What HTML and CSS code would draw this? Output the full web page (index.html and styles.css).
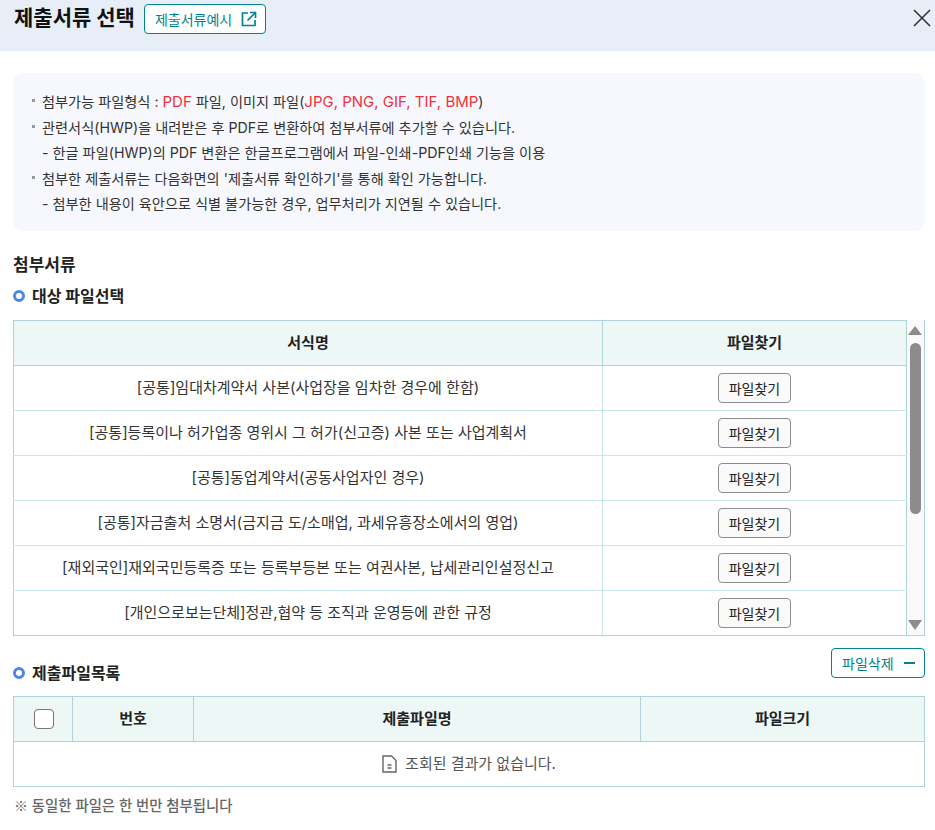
FILE: index.html
```html
<!DOCTYPE html>
<html lang="ko">
<head>
<meta charset="utf-8">
<title>제출서류 선택</title>
<link rel="stylesheet" href="styles.css">
</head>
<body>
<header class="top">
  <h1 class="title">제출서류 선택</h1>
  <a class="btn-line btn-sample">제출서류예시
    <svg class="ico-ext" width="16" height="16" viewBox="0 0 16 16" fill="none" stroke="#00838f" stroke-width="1.7"><path d="M7 2H1.5v12.5H14V9"/><path d="M6.5 9.5 14 2"/><path d="M9 1.5h5.5V7"/></svg>
  </a>
  <button class="close" aria-label="닫기"><svg width="18" height="18" viewBox="0 0 18 18" fill="none" stroke="#333" stroke-width="1.6"><path d="M1 1l16 16M17 1 1 17"/></svg></button>
</header>
<main class="body">
  <section class="notice">
    <p class="li">첨부가능 파일형식 : <em>PDF</em> 파일, 이미지 파일(<em>JPG, PNG, GIF, TIF, BMP</em>)</p>
    <p class="li">관련서식(HWP)을 내려받은 후 PDF로 변환하여 첨부서류에 추가할 수 있습니다.</p>
    <p class="sub">- 한글 파일(HWP)의 PDF 변환은 한글프로그램에서 파일-인쇄-PDF인쇄 기능을 이용</p>
    <p class="li">첨부한 제출서류는 다음화면의 '제출서류 확인하기'를 통해 확인 가능합니다.</p>
    <p class="sub">- 첨부한 내용이 육안으로 식별 불가능한 경우, 업무처리가 지연될 수 있습니다.</p>
  </section>
  <h2 class="h2">첨부서류</h2>
  <h3 class="h3">대상 파일선택</h3>
  <div class="scroll-box">
    <table class="grid grid-forms">
      <colgroup><col class="c-name"><col></colgroup>
      <thead><tr><th>서식명</th><th>파일찾기</th></tr></thead>
      <tbody>
        <tr><td>[공통]임대차계약서 사본(사업장을 임차한 경우에 한함)</td><td><button class="btn-find">파일찾기</button></td></tr>
        <tr><td>[공통]등록이나 허가업종 영위시 그 허가(신고증) 사본 또는 사업계획서</td><td><button class="btn-find">파일찾기</button></td></tr>
        <tr><td>[공통]동업계약서(공동사업자인 경우)</td><td><button class="btn-find">파일찾기</button></td></tr>
        <tr><td>[공통]자금출처 소명서(금지금 도/소매업, 과세유흥장소에서의 영업)</td><td><button class="btn-find">파일찾기</button></td></tr>
        <tr><td>[재외국인]재외국민등록증 또는 등록부등본 또는 여권사본, 납세관리인설정신고</td><td><button class="btn-find">파일찾기</button></td></tr>
        <tr><td>[개인으로보는단체]정관,협약 등 조직과 운영등에 관한 규정</td><td><button class="btn-find">파일찾기</button></td></tr>
      </tbody>
    </table>
    <div class="sbar">
      <span class="arrow up"></span>
      <span class="thumb-track"><span class="thumb"></span></span>
      <span class="arrow down"></span>
    </div>
  </div>
  <div class="list-head">
    <h3 class="h3 h3-list">제출파일목록</h3>
    <a class="btn-line btn-del">파일삭제<span class="minus"></span></a>
  </div>
  <table class="grid grid-files">
    <colgroup><col class="c-chk"><col class="c-no"><col class="c-file"><col></colgroup>
    <thead><tr><th class="th-chk"><span class="chk"></span></th><th>번호</th><th>제출파일명</th><th>파일크기</th></tr></thead>
    <tbody><tr><td colspan="4" class="empty">
      <svg class="ico-doc" width="15" height="18" viewBox="0 0 15 18" fill="none" stroke="#666" stroke-width="1.4"><path d="M1 1h8.5l4.5 4.5V17H1z"/><path d="M5.5 10h4M5.5 13h4"/></svg>조회된 결과가 없습니다.
    </td></tr></tbody>
  </table>
  <p class="foot"><span class="mark">※</span> 동일한 파일은 한 번만 첨부됩니다</p>
</main>
</body>
</html>
```
FILE: styles.css
```css
*, *::before, *::after { box-sizing: border-box; }
html, body { margin: 0; padding: 0; }
body {
  width: 935px;
  height: 830px;
  overflow: hidden;
  background: #fff;
  color: #222;
  font-family: Inter, "Noto Sans CJK KR", sans-serif;
  font-size: 15px;
}
.top {
  height: 51px;
  background: #e7eef8;
  display: flex;
  align-items: flex-start;
  padding: 4px 4px 0 14px;
}
.title {
  margin: 0 9px 0 0;
  font-size: 21px;
  line-height: 28px;
  font-weight: 700;
  color: #111;
}
.btn-line {
  display: inline-flex;
  align-items: center;
  height: 30px;
  border: 1px solid #00838f;
  border-radius: 4px;
  background: #fff;
  color: #00838f;
  font-size: 14px;
}
.btn-sample { width: 122px; padding-left: 10px; gap: 9px; }
.ico-ext { flex: none; }
.close {
  margin-left: auto;
  margin-top: 5px;
  padding: 0;
  border: 0;
  background: none;
  display: block;
  height: 18px;
}
.body { padding: 22px 10px 0 13px; }
.notice {
  height: 158px;
  padding: 16px 0 0 18px;
  background: #f7f8fe;
  border-radius: 10px;
  margin-bottom: 23px;
}
.notice p {
  margin: 0;
  font-size: 14.2px;
  line-height: 25.5px;
  color: #333;
  position: relative;
}
.notice em { font-style: normal; font-size: 15px; color: #f0323c; }
.li { padding-left: 11px; }
.li::before {
  content: "";
  position: absolute;
  left: 1px;
  top: 10px;
  width: 3px;
  height: 3px;
  background: #999;
}
.sub { padding-left: 11px; }
.h2 {
  margin: 0 0 8px;
  font-size: 17px;
  line-height: 23px;
  font-weight: 700;
  color: #222;
}
.h3 {
  margin: 0 0 13px;
  padding-left: 19px;
  font-size: 16px;
  line-height: 22px;
  font-weight: 700;
  color: #222;
  position: relative;
}
.h3::before {
  content: "";
  position: absolute;
  left: 0;
  top: 5px;
  width: 12px;
  height: 12px;
  border: 3px solid #4f86ec;
  border-radius: 50%;
  background: #fff;
}
.scroll-box {
  display: flex;
  height: 316px;
  border-right: 1px solid #b0d3d9;
  overflow: hidden;
  position: relative;
}
.grid {
  border-collapse: collapse;
  table-layout: fixed;
}
.grid th, .grid td {
  border: 1px solid #b0d3d9;
  text-align: center;
  padding: 0;
  font-size: 15px;
}
.grid th {
  height: 45px;
  padding-bottom: 3px;
  background: #edf7f6;
  font-weight: 700;
  color: #222;
}
.grid td { height: 45px; color: #333; }
.grid-forms { width: 894px; height: 316px; }
.grid-forms tbody td { border-color: #c9e6ea; border-left-color: #b0d3d9; }
.grid-forms tbody td:first-child { padding-bottom: 3px; }
.grid-forms tbody td:last-child { border-right-color: #b0d3d9; }
.grid-forms tbody tr:last-child td { border-bottom-color: #b0d3d9; }
.c-name { width: 589px; }
.btn-find {
  width: 73px;
  height: 30px;
  padding: 0;
  border: 1px solid #8c8c8c;
  border-radius: 4px;
  background: #fafafa;
  color: #222;
  font-family: inherit;
  font-size: 14px;
  vertical-align: middle;
}
.sbar {
  flex: 1;
  background: #fafafa;
  border-bottom: 1px solid #b0d3d9;
  display: flex;
  flex-direction: column;
  align-items: center;
  padding: 6px 1px 5px 0;
}
.arrow {
  flex: none;
  width: 0;
  height: 0;
  border-left: 7px solid transparent;
  border-right: 7px solid transparent;
}
.arrow.up { border-bottom: 9px solid #8c8c8c; }
.arrow.down { border-top: 10px solid #8c8c8c; }
.thumb-track { flex: 1; width: 100%; display: flex; justify-content: center; padding-top: 8px; }
.thumb { width: 11px; height: 171px; background: #8c8c8c; border-radius: 6px; }
.list-head {
  display: flex;
  justify-content: space-between;
  align-items: flex-start;
  height: 60px;
  padding-top: 12px;
}
.h3-list { margin: 14px 0 0; }
.btn-del {
  width: 94px;
  height: 30px;
  padding-left: 10px;
  gap: 10px;
}
.minus { width: 11px; height: 2px; background: #00838f; }
.grid-files { width: 912px; }
.c-chk { width: 59px; }
.c-no { width: 121px; }
.c-file { width: 447px; }
.grid th.th-chk { padding: 0 0 0 1px; }
.chk {
  display: block;
  width: 20px;
  height: 20px;
  margin: 0 auto;
  border: 1px solid #777;
  border-radius: 4px;
  background: #fff;
}
.grid td.empty { color: #555; padding-bottom: 3px; }
.ico-doc { vertical-align: -4px; margin-right: 8px; }
.foot {
  margin: 7px 0 0 1px;
  font-size: 14.4px;
  line-height: 22px;
  font-weight: 500;
  color: #666;
}
.mark { font-family: "Noto Sans CJK KR", sans-serif; font-size: 14px; }
```
